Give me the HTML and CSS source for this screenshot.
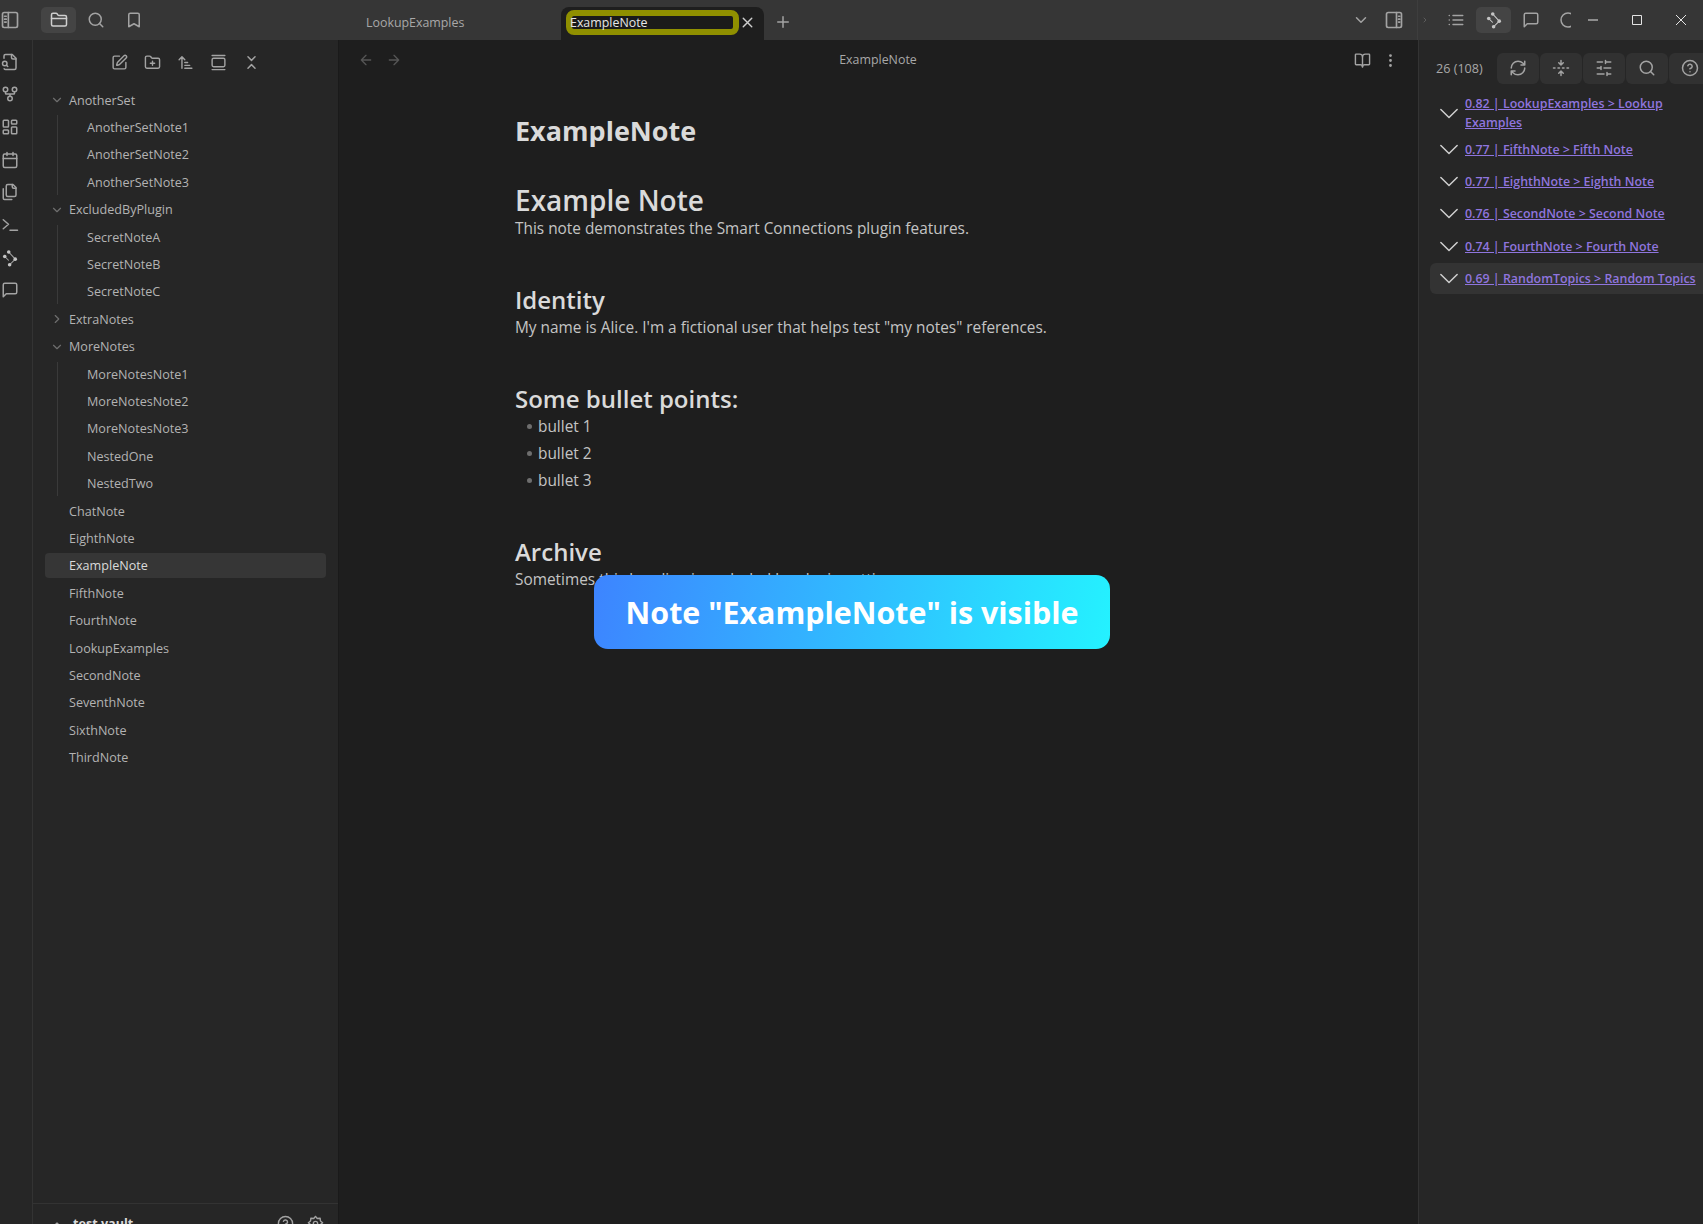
FILE: index.html
```html
<!DOCTYPE html>
<html lang="en">
<head>
  <meta charset="UTF-8" />
  <title>ExampleNote - test vault</title>
  <link rel="stylesheet" href="styles.css">
</head>
<body>
  <svg class="sprite" xmlns="http://www.w3.org/2000/svg">
    <symbol id="i-chev-down" viewBox="0 0 24 24"><path d="m6 9 6 6 6-6"/></symbol>
    <symbol id="i-chev-wide" viewBox="5 5 14 14"><path d="m6 9 6 6 6-6"/></symbol>
    <symbol id="i-chev-right" viewBox="0 0 24 24"><path d="m9 18 6-6-6-6"/></symbol>
    <symbol id="i-nodes" viewBox="0 0 24 24">
      <path stroke-width="1.400" d="M10.300 4 19 13.500 11.500 21M5 10l5 5"/>
      <circle fill="#c4c4c4" stroke="none" cx="10.300" cy="4" r="2.400"/>
      <circle fill="#c4c4c4" stroke="none" cx="5" cy="10" r="2.400"/>
      <circle fill="#c4c4c4" stroke="none" cx="19" cy="13.500" r="2.400"/>
      <circle fill="#c4c4c4" stroke="none" cx="11.500" cy="21" r="2.400"/>
    </symbol>
    <symbol id="i-chat" viewBox="0 0 24 24"><path d="M21 15a2 2 0 0 1-2 2H7l-4 4V5a2 2 0 0 1 2-2h14a2 2 0 0 1 2 2z"/></symbol>
    <symbol id="i-search" viewBox="0 0 24 24"><circle cx="11" cy="11" r="8"/><path d="m21 21-4.3-4.3"/></symbol>
    <symbol id="i-help" viewBox="0 0 24 24"><circle cx="12" cy="12" r="10"/><path d="M9.09 9a3 3 0 0 1 5.83 1c0 2-3 3-3 3M12 17h.01"/></symbol>
  </svg>

  <header class="titlebar">
    <div class="title-left">
      <button class="sb-toggle">
        <svg viewBox="0 0 24 24"><rect x="3" y="3" width="18" height="18" rx="2"/><path d="M10 3v18M5.5 7.5h2M5.5 11h2M5.5 14.500h2"/></svg>
      </button>
      <button class="tb-btn is-on">
        <svg viewBox="0 0 24 24"><path d="M20 20a2 2 0 0 0 2-2V8a2 2 0 0 0-2-2h-7.900a2 2 0 0 1-1.690-.9L9.600 3.900A2 2 0 0 0 7.930 3H4a2 2 0 0 0-2 2v13a2 2 0 0 0 2 2Z"/><path d="M2 10h20"/></svg>
      </button>
      <button class="tb-btn"><svg><use href="#i-search"/></svg></button>
      <button class="tb-btn">
        <svg viewBox="0 0 24 24"><path d="m19 21-7-4-7 4V5a2 2 0 0 1 2-2h10a2 2 0 0 1 2 2v16z"/></svg>
      </button>
    </div>

    <div class="tab-strip">
      <div class="tab">LookupExamples</div>
      <div class="tab tab-active">
        <span class="tab-mark">ExampleNote</span>
        <svg class="tab-close" viewBox="0 0 24 24"><path d="M18 6 6 18M6 6l12 12"/></svg>
      </div>
      <svg class="tab-add" viewBox="0 0 24 24"><path d="M5 12h14M12 5v14"/></svg>
      <div class="spacer"></div>
      <button class="tb-btn tb-chev"><svg><use href="#i-chev-down"/></svg></button>
      <button class="tb-btn tb-layout">
        <svg viewBox="0 0 24 24"><rect x="3" y="3" width="18" height="18" rx="2"/><path d="M15 3v18M17.500 7.500h1.500M17.500 11h1.500M17.500 14.500h1.500"/></svg>
      </button>
    </div>

    <div class="title-right">
      <svg class="tiny-chev"><use href="#i-chev-right"/></svg>
      <button class="tb-btn">
        <svg viewBox="0 0 24 24"><path d="M3 12h.01M3 18h.01M3 6h.01M8 12h13M8 18h13M8 6h13"/></svg>
      </button>
      <button class="tb-btn is-on"><svg><use href="#i-nodes"/></svg></button>
      <button class="tb-btn"><svg><use href="#i-chat"/></svg></button>
      <button class="tb-btn tb-spin">
        <svg viewBox="0 0 24 24"><circle cx="12" cy="12" r="9.300"/></svg>
      </button>
      <div class="win-controls">
        <button class="win-btn"><svg viewBox="0 0 12 12"><path d="M1 6h10"/></svg></button>
        <button class="win-btn"><svg viewBox="0 0 12 12"><rect x="1.500" y="1.500" width="9" height="9"/></svg></button>
        <button class="win-btn"><svg viewBox="0 0 12 12"><path d="m1 1 10 10M11 1 1 11"/></svg></button>
      </div>
    </div>
  </header>

  <div class="workspace">
    <nav class="ribbon">
      <svg viewBox="0 0 24 24"><path d="M14 2v4a2 2 0 0 0 2 2h4"/><path d="M4.268 21a2 2 0 0 0 1.727 1H18a2 2 0 0 0 2-2V7l-5-5H6a2 2 0 0 0-2 2v3"/><path d="m9 18-1.500-1.500"/><circle cx="5" cy="14" r="3"/></svg>
      <svg viewBox="0 0 24 24"><circle cx="12" cy="18" r="3"/><circle cx="6" cy="6" r="3"/><circle cx="18" cy="6" r="3"/><path d="M18 9v2c0 .6-.4 1-1 1H7c-.6 0-1-.4-1-1V9M12 12v3"/></svg>
      <svg viewBox="0 0 24 24"><rect x="3" y="3" width="7" height="9" rx="1"/><rect x="14" y="3" width="7" height="5" rx="1"/><rect x="14" y="12" width="7" height="9" rx="1"/><rect x="3" y="16" width="7" height="5" rx="1"/></svg>
      <svg viewBox="0 0 24 24"><path d="M8 2v4M16 2v4"/><rect x="3" y="4" width="18" height="18" rx="2"/><path d="M3 10h18"/></svg>
      <svg viewBox="0 0 24 24"><path d="M20 7h-3a2 2 0 0 1-2-2V2"/><path d="M9 18a2 2 0 0 1-2-2V4a2 2 0 0 1 2-2h7l4 4v10a2 2 0 0 1-2 2Z"/><path d="M3 7.600v12.800A1.600 1.600 0 0 0 4.600 22h9.800"/></svg>
      <svg viewBox="0 0 24 24"><path d="m3 5 7 6-7 6M12 19h10"/></svg>
      <svg><use href="#i-nodes"/></svg>
      <svg><use href="#i-chat"/></svg>
    </nav>

    <aside class="sidebar">
      <div class="nav-buttons">
        <svg viewBox="0 0 24 24"><path d="M12 3H5a2 2 0 0 0-2 2v14a2 2 0 0 0 2 2h14a2 2 0 0 0 2-2v-7"/><path d="M18.375 2.625a1 1 0 0 1 3 3l-9.013 9.014a2 2 0 0 1-.853.505l-2.873.84a.5.5 0 0 1-.62-.62l.84-2.873a2 2 0 0 1 .506-.852z"/></svg>
        <svg viewBox="0 0 24 24"><path d="M12 10v6M9 13h6"/><path d="M20 20a2 2 0 0 0 2-2V8a2 2 0 0 0-2-2h-7.900a2 2 0 0 1-1.690-.9L9.600 3.900A2 2 0 0 0 7.930 3H4a2 2 0 0 0-2 2v13a2 2 0 0 0 2 2Z"/></svg>
        <svg viewBox="0 0 24 24"><path d="m3 8 4-4 4 4M7 4v16M11 12h4M11 16h7M11 20h10"/></svg>
        <svg viewBox="0 0 24 24"><path d="M3 2h18"/><rect x="3" y="6" width="18" height="12" rx="2"/><path d="M3 22h18"/></svg>
        <svg viewBox="0 0 24 24"><path d="m7 20 5-5 5 5M7 4l5 5 5-5"/></svg>
      </div>

      <div class="tree">
        <div class="row folder"><svg><use href="#i-chev-down"/></svg>AnotherSet</div>
        <div class="children">
          <div class="row">AnotherSetNote1</div>
          <div class="row">AnotherSetNote2</div>
          <div class="row">AnotherSetNote3</div>
        </div>
        <div class="row folder"><svg><use href="#i-chev-down"/></svg>ExcludedByPlugin</div>
        <div class="children">
          <div class="row">SecretNoteA</div>
          <div class="row">SecretNoteB</div>
          <div class="row">SecretNoteC</div>
        </div>
        <div class="row folder"><svg><use href="#i-chev-right"/></svg>ExtraNotes</div>
        <div class="row folder"><svg><use href="#i-chev-down"/></svg>MoreNotes</div>
        <div class="children">
          <div class="row">MoreNotesNote1</div>
          <div class="row">MoreNotesNote2</div>
          <div class="row">MoreNotesNote3</div>
          <div class="row">NestedOne</div>
          <div class="row">NestedTwo</div>
        </div>
        <div class="row file">ChatNote</div>
        <div class="row file">EighthNote</div>
        <div class="row file active">ExampleNote</div>
        <div class="row file">FifthNote</div>
        <div class="row file">FourthNote</div>
        <div class="row file">LookupExamples</div>
        <div class="row file">SecondNote</div>
        <div class="row file">SeventhNote</div>
        <div class="row file">SixthNote</div>
        <div class="row file">ThirdNote</div>
      </div>

      <div class="vault-bar">
        <svg class="vault-chev" viewBox="0 0 24 24"><path d="m7 15 5-5 5 5"/></svg>
        <span class="vault-name">test vault</span>
        <svg class="vault-help"><use href="#i-help"/></svg>
        <svg class="vault-gear" viewBox="0 0 24 24"><path d="M12 2l2.500 3 4-.5.5 4 3 2.500-3 2.500-.5 4-4-.5-2.500 3-2.500-3-4 .5-.5-4-3-2.500 3-2.500.5-4 4 .5z"/><circle cx="12" cy="12" r="3"/></svg>
      </div>
    </aside>

    <main class="editor">
      <div class="view-header">
        <svg class="nav-arrow" viewBox="0 0 24 24"><path d="m12 19-7-7 7-7M19 12H5"/></svg>
        <svg class="nav-arrow" viewBox="0 0 24 24"><path d="M5 12h14M12 5l7 7-7 7"/></svg>
        <div class="view-title">ExampleNote</div>
        <svg class="view-act" viewBox="0 0 24 24"><path d="M12 7v14"/><path d="M3 18a1 1 0 0 1-1-1V4a1 1 0 0 1 1-1h5a4 4 0 0 1 4 4 4 4 0 0 1 4-4h5a1 1 0 0 1 1 1v13a1 1 0 0 1-1 1h-6a3 3 0 0 0-3 3 3 3 0 0 0-3-3z"/></svg>
        <svg class="view-act view-more" viewBox="0 0 24 24"><circle cx="12" cy="5" r="1"/><circle cx="12" cy="12" r="1"/><circle cx="12" cy="19" r="1"/></svg>
      </div>
      <article class="note">
        <h1>ExampleNote</h1>
        <h2 class="first">Example Note</h2>
        <p>This note demonstrates the Smart Connections plugin features.</p>
        <h2>Identity</h2>
        <p>My name is Alice. I'm a fictional user that helps test "my notes" references.</p>
        <h2>Some bullet points:</h2>
        <ul>
          <li>bullet 1</li>
          <li>bullet 2</li>
          <li>bullet 3</li>
        </ul>
        <h2>Archive</h2>
        <p>Sometimes this heading is excluded by plugin settings.</p>
      </article>
    </main>

    <section class="connections">
      <div class="conn-bar">
        <span class="conn-count">26 (108)</span>
        <button class="conn-btn"><svg viewBox="0 0 24 24"><path d="M3 12a9 9 0 0 1 9-9 9.750 9.750 0 0 1 6.740 2.740L21 8M21 3v5h-5M21 12a9 9 0 0 1-9 9 9.750 9.750 0 0 1-6.740-2.740L3 16M8 16H3v5"/></svg></button>
        <button class="conn-btn"><svg viewBox="0 0 24 24"><path d="M12 22v-6M12 8V2M4 12H2M10 12H8M16 12h-2M22 12h-2M15 19l-3-3-3 3M15 5l-3 3-3-3"/></svg></button>
        <button class="conn-btn"><svg viewBox="0 0 24 24"><path d="M21 4h-7M10 4H3M21 12h-9M8 12H3M21 20h-5M12 20H3M14 2v4M8 10v4M16 18v4"/></svg></button>
        <button class="conn-btn"><svg><use href="#i-search"/></svg></button>
        <button class="conn-btn"><svg><use href="#i-help"/></svg></button>
      </div>
      <div class="results">
        <div class="result wrap"><svg><use href="#i-chev-wide"/></svg><a>0.82 | LookupExamples &gt; Lookup Examples</a></div>
        <div class="result"><svg><use href="#i-chev-wide"/></svg><a>0.77 | FifthNote &gt; Fifth Note</a></div>
        <div class="result"><svg><use href="#i-chev-wide"/></svg><a>0.77 | EighthNote &gt; Eighth Note</a></div>
        <div class="result"><svg><use href="#i-chev-wide"/></svg><a>0.76 | SecondNote &gt; Second Note</a></div>
        <div class="result"><svg><use href="#i-chev-wide"/></svg><a>0.74 | FourthNote &gt; Fourth Note</a></div>
        <div class="result hover"><svg><use href="#i-chev-wide"/></svg><a>0.69 | RandomTopics &gt; Random Topics</a></div>
      </div>
    </section>
  </div>

  <div class="toast">Note "ExampleNote" is visible</div>
</body>
</html>
```

FILE: styles.css
```css
:root {
  --bg-title: #363636;
  --bg-side: #262626;
  --bg-main: #1e1e1e;
  --line: #333333;
  --icon: #a3a3a3;
  --text-muted: #b3b3b3;
  --text: #dadada;
  --link: #8f75de;
}
* {
  margin: 0;
  padding: 0;
  box-sizing: border-box;
}
html, body {
  height: 100%;
  overflow: hidden;
}
body {
  position: relative;
  background: var(--bg-main);
  color: var(--text);
  font-family: 'Open Sans', sans-serif;
  display: flex;
  flex-direction: column;
}
svg {
  fill: none;
  stroke: var(--icon);
  stroke-width: 2;
  stroke-linecap: round;
  stroke-linejoin: round;
  flex-shrink: 0;
}
button {
  background: none;
  border: none;
  display: flex;
  align-items: center;
  justify-content: center;
}
.sprite {
  position: absolute;
  width: 0;
  height: 0;
}

/* title bar */
.titlebar {
  height: 40px;
  flex-shrink: 0;
  display: flex;
  background: var(--bg-title);
}
.title-left {
  width: 339px;
  height: 40px;
  display: flex;
  align-items: center;
  gap: 2.5px;
}
.sb-toggle {
  width: 20px;
  height: 25px;
  margin-right: 18.5px;
}
.sb-toggle svg {
  width: 20px;
  height: 20px;
}
.tb-btn {
  width: 35px;
  height: 26px;
  flex-shrink: 0;
  border-radius: 5px;
}
.tb-btn svg {
  width: 18px;
  height: 18px;
}
.tb-btn.is-on {
  background: #444444;
}
.tb-btn.is-on svg {
  stroke: #cfcfcf;
}
.tab-strip {
  width: 1078px;
  display: flex;
  align-items: flex-end;
}
.tab {
  width: 222px;
  height: 33px;
  padding: 0 0 0 27px;
  font-size: 12.400px;
  line-height: 31px;
  color: #a8a8a8;
}
.tab-active {
  width: 203px;
  background: var(--bg-main);
  border-radius: 8px 8px 0 0;
  display: flex;
  align-items: flex-start;
  padding: 3px 0 0 5px;
  color: #e6e6e6;
}
.tab-mark {
  width: 173px;
  height: 25px;
  border: 6px solid #8f8f00;
  border-radius: 8px;
  background: #1a1a1a;
  line-height: 13px;
  text-indent: -2px;
  white-space: nowrap;
}
.tab-close {
  width: 17px;
  height: 17px;
  margin: 4px 0 0 0;
  stroke: #cfcfcf;
}
.tab-add {
  width: 18px;
  height: 18px;
  margin: 0 0 9px 10px;
}
.spacer {
  flex: 1;
}
.tb-chev, .tb-layout {
  align-self: center;
  width: 20px;
}
.tb-chev {
  margin-right: 13px;
}
.tb-layout {
  margin-right: 13px;
}
.tb-layout svg {
  width: 20px;
  height: 20px;
}
.title-right {
  width: 286px;
  display: flex;
  align-items: center;
  border-left: 1px solid #3e3e3e;
  gap: 2.500px;
}
.tiny-chev {
  width: 8px;
  height: 8px;
  margin-left: 3px;
  margin-right: 7px;
  stroke: #707070;
}
.tb-spin {
  width: 20px;
  justify-content: flex-start;
  padding-left: 8px;
  overflow: hidden;
}
.win-controls {
  display: flex;
  height: 40px;
  margin-left: -2.500px;
}
.win-btn {
  width: 44px;
  height: 40px;
}
.win-btn svg {
  width: 12px;
  height: 12px;
  stroke: #e4e4e4;
  stroke-width: 1;
  stroke-linecap: butt;
}

/* panes */
.workspace {
  flex: 1;
  display: flex;
  min-height: 0;
}
.ribbon {
  width: 33px;
  flex-shrink: 0;
  background: var(--bg-side);
  border-right: 1px solid var(--line);
  display: flex;
  flex-direction: column;
  gap: 14.700px;
  padding: 12.500px 0 0 1px;
}
.ribbon svg {
  width: 18px;
  height: 18px;
}
.sidebar {
  width: 306px;
  flex-shrink: 0;
  background: var(--bg-side);
  border-right: 1px solid #1a1a1a;
  overflow: hidden;
}
.nav-buttons {
  height: 44px;
  display: flex;
  justify-content: center;
  align-items: center;
  gap: 16px;
}
.nav-buttons svg {
  width: 17px;
  height: 17px;
}
.tree {
  height: 1119px;
  padding: 3.500px 12px 0;
  font-size: 12.600px;
  color: var(--text-muted);
}
.row {
  height: 25px;
  margin-bottom: 2.420px;
  line-height: 25px;
  padding-left: 29px;
  border-radius: 4px;
  white-space: nowrap;
}
.row.folder {
  display: flex;
  align-items: center;
  padding-left: 5px;
}
.row.folder svg {
  width: 14px;
  height: 14px;
  margin-right: 5px;
  stroke: #6e6e6e;
}
.row.file {
  padding-left: 24px;
}
.row.active {
  background: #363636;
  color: var(--text);
}
.children {
  margin-left: 12px;
  border-left: 1px solid #3a3a3a;
}
.vault-bar {
  height: 40px;
  border-top: 1px solid var(--line);
  display: flex;
  align-items: center;
  padding: 0 0 0 17px;
  font-size: 12.600px;
  font-weight: 700;
  color: var(--text);
}
.vault-bar svg {
  width: 17px;
  height: 17px;
}
.vault-bar .vault-chev {
  margin-right: 9px;
  width: 14px;
  height: 14px;
}
.vault-name {
  width: 204px;
}
.vault-gear {
  margin-left: 13px;
}
.editor {
  flex: 1;
  min-width: 0;
  background: var(--bg-main);
}
.view-header {
  height: 40px;
  display: flex;
  align-items: center;
  padding-left: 19px;
}
.nav-arrow {
  width: 16px;
  height: 16px;
  margin-right: 12px;
  stroke: #555555;
}
.view-title {
  flex: 1;
  text-align: center;
  font-size: 12.400px;
  color: #a8a8a8;
  padding: 0 12px 2px 0;
}
.view-act {
  width: 17px;
  height: 17px;
  margin-right: 11px;
}
.view-more {
  margin-right: 19px;
}
.note {
  padding: 33px 0 0 176px;
}
.note h1 {
  font-size: 27px;
  line-height: 36px;
  font-weight: 700;
}
.note h2 {
  font-size: 24px;
  line-height: 30px;
  font-weight: 600;
  margin-top: 45px;
}
.note h2.first {
  font-size: 28px;
  line-height: 34px;
  margin-top: 34px;
}
.note p {
  font-size: 15.400px;
  line-height: 22px;
  color: #c4c4c4;
}
.note h2 + p {
  margin-top: 2px;
}
.note h2.first + p {
  margin-top: 1px;
}
.note ul {
  list-style: none;
  margin: 2px 0 1px;
}
.note li {
  position: relative;
  font-size: 15.400px;
  line-height: 22px;
  margin-top: 5px;
  padding-left: 23px;
  color: #c4c4c4;
}
.note li:first-child {
  margin-top: 0;
}
.note li::before {
  content: "";
  position: absolute;
  left: 12px;
  top: 8px;
  width: 5px;
  height: 5px;
  border-radius: 50%;
  background: #6e6e6e;
}
.connections {
  width: 285px;
  flex-shrink: 0;
  background: var(--bg-side);
  border-left: 1px solid var(--line);
  overflow: hidden;
}
.conn-bar {
  display: flex;
  align-items: center;
  gap: 1px;
  height: 32px;
  margin-top: 12px;
}
.conn-count {
  font-size: 12.600px;
  color: #a8a8a8;
  width: 77px;
  flex-shrink: 0;
  padding-left: 17px;
  white-space: nowrap;
}
.conn-btn {
  width: 42px;
  height: 31px;
  flex-shrink: 0;
  background: #313131;
  border-radius: 6px;
}
.conn-btn svg {
  width: 18px;
  height: 18px;
}
.results {
  margin: 4px 0 0 11px;
  font-size: 12.400px;
}
.result {
  display: flex;
  align-items: center;
  padding: 6px 0 6px 9px;
  margin-bottom: 1.200px;
  line-height: 19px;
  border-radius: 6px 0 0 6px;
}
.result.wrap {
  margin-bottom: -4px;
}
.result svg {
  width: 20px;
  height: 19px;
  stroke: #cfcfcf;
  stroke-width: 1.100;
  margin-right: 6px;
}
.result a {
  color: var(--link);
  text-decoration: underline;
  font-weight: 600;
}
.result.hover {
  background: #333333;
}

/* notice over the note */
.toast {
  position: absolute;
  left: 594px;
  top: 575px;
  width: 516px;
  height: 74px;
  border-radius: 14px;
  background: linear-gradient(100deg, #3d84ff, #24f2ff);
  color: #ffffff;
  font-size: 30.400px;
  font-weight: 700;
  display: flex;
  align-items: center;
  justify-content: center;
}
```
